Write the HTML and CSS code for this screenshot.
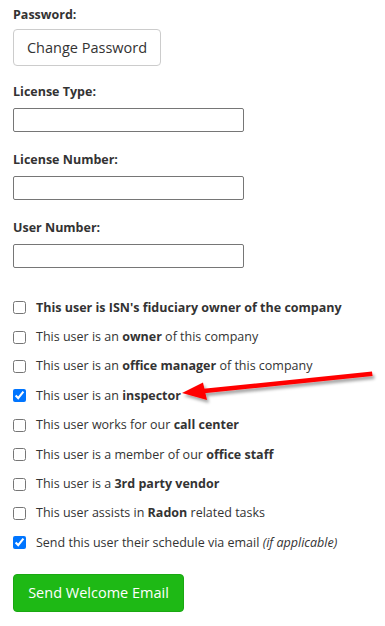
FILE: index.html
```html
<!DOCTYPE html>
<html lang="en">
<head>
    <meta charset="UTF-8">
    <meta name="viewport" content="width=device-width, initial-scale=1.0">
    <title>User Settings</title>
    <link rel="stylesheet" href="styles.css">
</head>
<body>
    <div class="form">
        <div class="field field-password">
            <label>Password:</label>
            <button class="btn-default">Change Password</button>
        </div>

        <div class="field">
            <label for="licenseType">License Type:</label>
            <input type="text" id="licenseType">
        </div>

        <div class="field">
            <label for="licenseNumber">License Number:</label>
            <input type="text" id="licenseNumber">
        </div>

        <div class="field">
            <label for="userNumber">User Number:</label>
            <input type="text" id="userNumber">
        </div>

        <ul class="checks">
            <li><label><input type="checkbox"><span><b>This user is ISN's fiduciary owner of the company</b></span></label></li>
            <li><label><input type="checkbox"><span>This user is an <b>owner</b> of this company</span></label></li>
            <li><label><input type="checkbox"><span>This user is an <b>office manager</b> of this company</span></label></li>
            <li><label><input type="checkbox" checked><span>This user is an <b>inspector</b></span></label></li>
            <li><label><input type="checkbox"><span>This user works for our <b>call center</b></span></label></li>
            <li><label><input type="checkbox"><span>This user is a member of our <b>office staff</b></span></label></li>
            <li><label><input type="checkbox"><span>This user is a <b>3rd party vendor</b></span></label></li>
            <li><label><input type="checkbox"><span>This user assists in <b>Radon</b> related tasks</span></label></li>
            <li><label><input type="checkbox" checked><span>Send this user their schedule via email <i>(if applicable)</i></span></label></li>
        </ul>

        <button class="btn-success">Send Welcome Email</button>
    </div>

    <!-- annotation arrow drawn over the screenshot -->
    <svg class="annotation" width="385" height="626" viewBox="0 0 385 626">
        <defs>
            <filter id="shadow" x="-10%" y="-50%" width="120%" height="200%">
                <feDropShadow dx="2" dy="3" stdDeviation="1.5" flood-color="#000" flood-opacity="0.35"/>
            </filter>
        </defs>
        <g filter="url(#shadow)" fill="#f00">
            <polygon points="372,371.5 372.6,376 204,393.2 203.4,388.8"/>
            <polygon points="182,393 203,382.5 207,400"/>
        </g>
    </svg>
</body>
</html>
```

FILE: styles.css
```css
body {
    font-family: "Open Sans", "Noto Sans", sans-serif;
    font-size: 12.5px;
    color: #333;
    background: #fff;
    margin: 0;
    position: relative;
}
.form {
    padding: 5px 13px 0;
}
.field {
    margin-bottom: 18px;
}
.field label {
    display: block;
    font-weight: bold;
    line-height: 20px;
    margin-bottom: 6px;
}
.field-password {
    margin-bottom: 16px;
}
.field-password label {
    margin-bottom: 4px;
}
.field input {
    display: block;
    width: 231px;
    height: 24px;
    box-sizing: border-box;
    border: 1px solid #767676;
    border-radius: 2px;
    margin: 0;
    padding: 2px 4px;
    font: inherit;
}
.btn-default {
    font-family: inherit;
    font-size: 14.5px;
    color: #333;
    background: #fff;
    border: 1px solid #ccc;
    border-radius: 4px;
    height: 37px;
    width: 148px;
    padding: 0;
    cursor: pointer;
}
.checks {
    list-style: none;
    margin: 0;
    padding: 7px 0 0;
}
.checks li {
    height: 29.4px;
    display: flex;
    align-items: center;
}
.checks label {
    display: flex;
    align-items: center;
    line-height: 20px;
}
.checks input {
    width: 13px;
    height: 13px;
    margin: 0 10px 0 0;
}
.btn-success {
    margin-top: 16px;
    font-family: inherit;
    font-size: 14.5px;
    color: #fff;
    background: #1eb915;
    border: 1px solid #1aa812;
    border-radius: 4px;
    height: 38px;
    width: 171px;
    padding: 0;
    cursor: pointer;
}
.annotation {
    position: absolute;
    top: 0;
    left: 0;
    pointer-events: none;
}
```
